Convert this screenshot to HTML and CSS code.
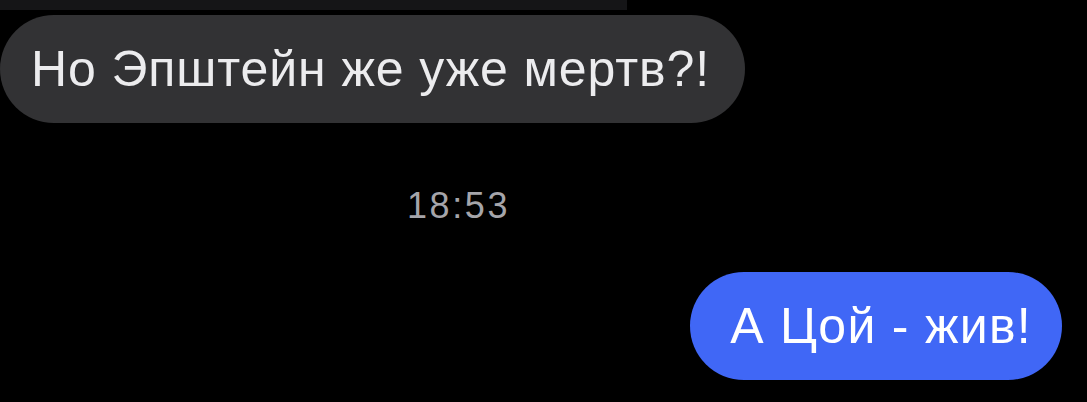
FILE: index.html
```html
<!DOCTYPE html>
<html lang="ru">
<head>
<meta charset="utf-8">
<link rel="stylesheet" href="styles.css">
</head>
<body>
<div class="chat">
  <div class="prev-bubble"></div>
  <div class="row row-in">
    <div class="bubble bubble-in">Но Эпштейн же уже мертв?!</div>
  </div>
  <div class="time">18:53</div>
  <div class="row row-out">
    <div class="bubble bubble-out">А Цой - жив!</div>
  </div>
</div>
</body>
</html>
```
FILE: styles.css
```css
html, body {
  margin: 0;
  padding: 0;
  background: #000;
}
body {
  width: 1087px;
  height: 402px;
  overflow: hidden;
  font-family: "Liberation Sans", Arial, sans-serif;
}
.chat {
  display: flex;
  flex-direction: column;
}
.prev-bubble {
  width: 627px;
  height: 10px;
  background: #151517;
}
.row {
  display: flex;
}
.row-in {
  margin-top: 5px;
  justify-content: flex-start;
}
.row-out {
  justify-content: flex-end;
  padding-right: 25px;
}
.bubble {
  height: 108px;
  line-height: 108px;
  border-radius: 54px;
  font-size: 50px;
  white-space: nowrap;
}
.bubble-in {
  background: #323234;
  color: #ececee;
  letter-spacing: 0.9px;
  padding: 0 35px 0 31px;
}
.bubble-out {
  background: #4067f6;
  color: #fff;
  letter-spacing: 1.3px;
  padding: 0 30px 0 40px;
}
.time {
  margin-top: 63px;
  margin-left: 407px;
  height: 86px;
  font-size: 36px;
  line-height: 40px;
  color: #a5a5aa;
  letter-spacing: 2.6px;
}
```
